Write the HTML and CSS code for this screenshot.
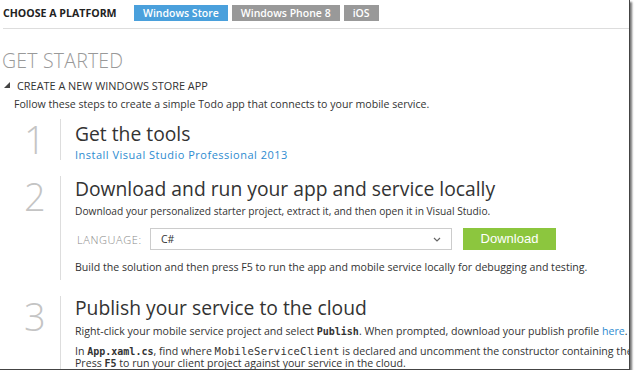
FILE: index.html
```html
<!DOCTYPE html>
<html>
<head>
<meta charset="utf-8">
<link rel="stylesheet" href="styles.css">
</head>
<body>
<div class="frame">
  <div class="platform-bar">
    <span class="platform-label">CHOOSE A PLATFORM</span>
    <div class="tabs">
      <span class="tab tab-active">Windows Store</span>
      <span class="tab">Windows Phone 8</span>
      <span class="tab">iOS</span>
    </div>
  </div>
  <div class="rule"></div>
  <h1 class="title">GET STARTED</h1>
  <div class="section-title"><span class="tri"></span>CREATE A NEW WINDOWS STORE APP</div>
  <p class="intro">Follow these steps to create a simple Todo app that connects to your mobile service.</p>
  <div class="steps">
    <div class="step step1">
      <div class="num">1</div>
      <div class="body">
        <h2>Get the tools</h2>
        <a class="link">Install Visual Studio Professional 2013</a>
      </div>
    </div>
    <div class="step step2">
      <div class="num">2</div>
      <div class="body">
        <h2>Download and run your app and service locally</h2>
        <p class="small">Download your personalized starter project, extract it, and then open it in Visual Studio.</p>
        <div class="lang-row">
          <span class="lang-label">LANGUAGE:</span>
          <div class="select"><span>C#</span><svg class="chev" width="8" height="5" viewBox="0 0 8 5"><path d="M1 1 L4 4 L7 1" fill="none" stroke="#666" stroke-width="1.2"/></svg></div>
          <span class="btn">Download</span>
        </div>
        <p class="text">Build the solution and then press F5 to run the app and mobile service locally for debugging and testing.</p>
      </div>
    </div>
    <div class="step step3">
      <div class="num">3</div>
      <div class="body">
        <h2>Publish your service to the cloud</h2>
        <p class="text nowrap">Right-click your mobile service project and select <code>Publish</code>. When prompted, download your publish profile <a class="link inline">here</a>.</p>
        <p class="text nowrap tight">In <code>App.xaml.cs</code>, find where <code class="plain">MobileServiceClient</code> is declared and uncomment the constructor containing the URL and application key.<br>Press <code>F5</code> to run your client project against your service in the cloud.</p>
      </div>
    </div>
  </div>
</div>
</body>
</html>
```
FILE: styles.css
```css
html, body {
  margin: 0;
  padding: 0;
  background: #fff;
}
.frame {
  width: 630px;
  height: 370px;
  overflow: hidden;
  background: #fff;
  border-right: 1px solid #444;
  border-bottom: 1px solid #444;
  box-shadow: 2px 2px 2px rgba(0,0,0,0.55);
  font-family: "Open Sans", "Noto Sans", sans-serif;
  color: #333;
  box-sizing: border-box;
}
.platform-bar {
  display: flex;
  align-items: center;
  height: 16px;
  margin-top: 5px;
  padding-left: 3px;
}
.platform-label {
  font-size: 10.6px;
  font-weight: 700;
  color: #222;
  width: 131px;
}
.tabs {
  display: flex;
  gap: 4px;
}
.tab {
  display: block;
  height: 16px;
  line-height: 16px;
  padding: 0 9px;
  background: #999;
  color: #fff;
  font-size: 10.5px;
  font-weight: 600;
}
.tab-active {
  background: #4aa0dc;
}
.rule {
  height: 1px;
  background: #ddd;
  margin: 7px 0 0 3px;
}
.title {
  margin: 21px 0 0 2px;
  font-size: 19.5px;
  font-weight: 300;
  color: #999;
  line-height: 22px;
  letter-spacing: 0.2px;
}
.section-title {
  display: flex;
  align-items: center;
  margin-top: 6px;
  padding-left: 4px;
  font-size: 10.9px;
  color: #333;
  height: 14px;
}
.tri {
  width: 0;
  height: 0;
  border-left: 6px solid transparent;
  border-bottom: 6px solid #444;
  margin-right: 7px;
}
.intro {
  margin: 5px 0 0 14px;
  font-size: 10.6px;
  line-height: 14px;
}
.steps {
  display: flex;
  flex-direction: column;
  gap: 16px;
  margin-top: 8px;
}
.step {
  display: flex;
}
.num {
  width: 60px;
  box-sizing: border-box;
  padding-left: 24px;
  font-size: 38px;
  font-weight: 300;
  color: #c4c4c4;
  line-height: 40px;
  margin-top: 0;
}
.body {
  border-left: 1px solid #ddd;
  padding-left: 14px;
  flex: 1;
  min-width: 0;
}
h2 {
  margin: 0;
  font-size: 19.3px;
  font-weight: 400;
  color: #333;
  line-height: 24px;
}
.step1 .body { padding-top: 3px; height: 38px; }
.step2 .body { padding-top: 1px; padding-bottom: 6px; }
.step3 .body { padding-top: 0; }
.link {
  color: #2d8bd0;
  font-size: 11px;
  letter-spacing: 0.5px;
}
.link.inline { font-size: inherit; letter-spacing: 0; }
.step1 .link { display: block; margin-top: 2px; line-height: 14px; }
.small {
  margin: 3px 0 0;
  font-size: 10.2px;
  line-height: 14px;
}
.text {
  margin: 0;
  font-size: 10.6px;
  line-height: 13px;
}
.nowrap { white-space: nowrap; }
.step3 .text { margin-top: 5px; }
.step3 .tight { margin-top: 7px; line-height: 12px; }
code {
  font-family: "DejaVu Sans Mono", monospace;
  font-weight: 700;
  font-size: 10px;
  line-height: 1;
}
code.plain { font-weight: 400; font-size: 10.6px; letter-spacing: 0.2px; }
.lang-row {
  display: flex;
  align-items: center;
  margin-top: 10px;
  height: 22px;
}
.lang-label {
  width: 75px;
  padding-left: 2px;
  box-sizing: border-box;
  font-size: 11px;
  letter-spacing: 0.6px;
  font-weight: 300;
  color: #888;
}
.select {
  display: flex;
  align-items: center;
  justify-content: space-between;
  box-sizing: border-box;
  width: 302px;
  height: 22px;
  border: 1px solid #ccc;
  padding: 0 10px;
  font-size: 10.5px;
}
.btn {
  margin-left: 11px;
  width: 93px;
  height: 22px;
  line-height: 22px;
  text-align: center;
  background: #8cc63e;
  color: #fff;
  font-family: "Liberation Sans", Arial, sans-serif;
  font-size: 13px;
}
.step2 .text { margin-top: 11px; }
```
